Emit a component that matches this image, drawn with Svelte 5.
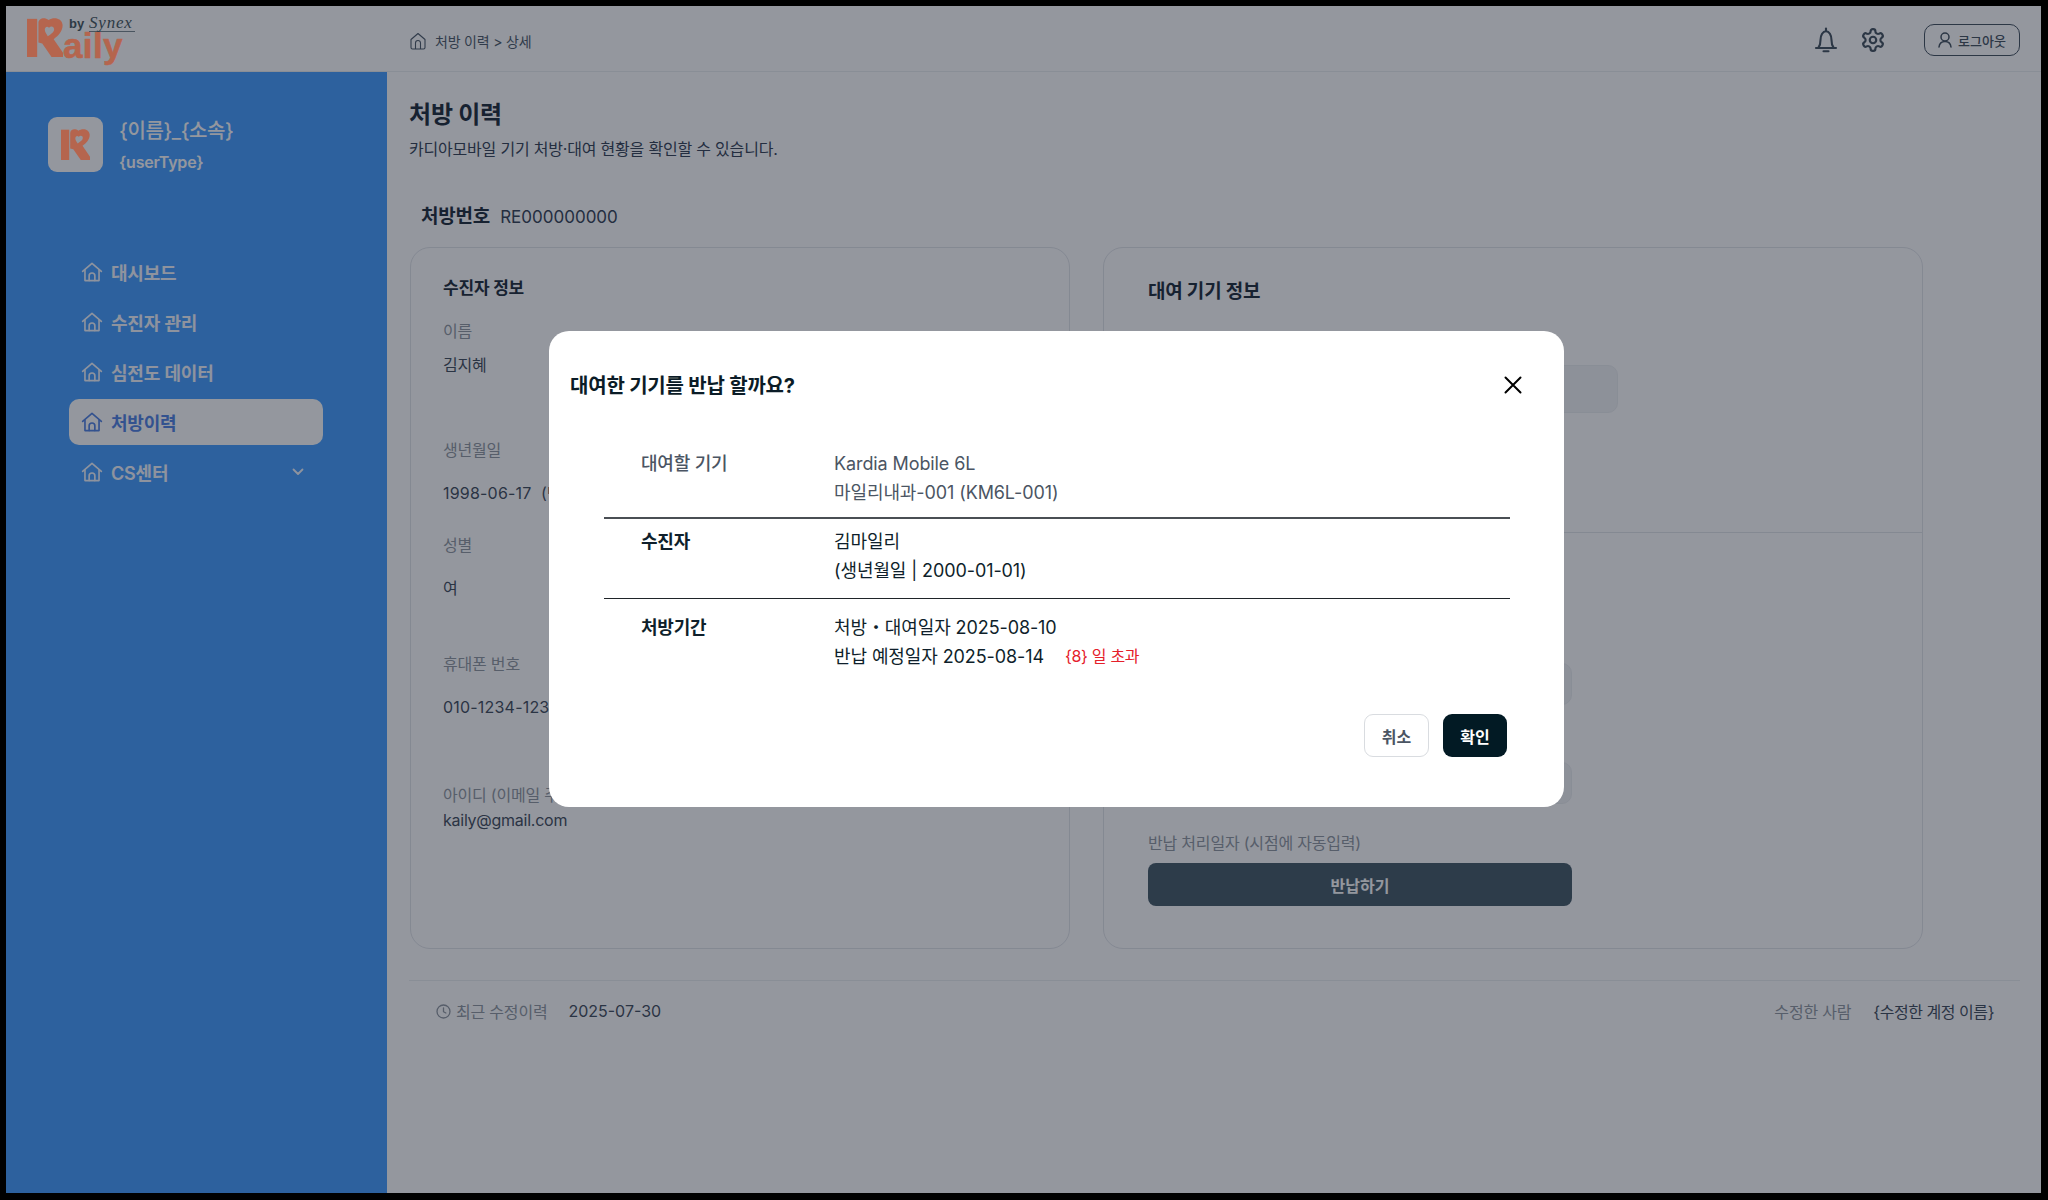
<script>
  const menu = [
    { label: "대시보드" },
    { label: "수진자 관리" },
    { label: "심전도 데이터" },
    { label: "처방이력", active: true },
    { label: "CS센터", more: true }
  ];
</script>

{#snippet home()}
  <svg class="home" width="22" height="22" viewBox="0 0 20 20" fill="none" stroke="currentColor" stroke-width="1.5" stroke-linejoin="round" stroke-linecap="round" aria-hidden="true">
    <path d="M1.500 9.500 10 2.200l8.500 7.300" />
    <path d="M3.600 8v9.800h12.800V8" />
    <path d="M7.400 17.800v-4.300a2.600 2.600 0 0 1 5.200 0v4.300" />
  </svg>
{/snippet}

{#snippet mark()}
  <svg viewBox="0 0 85 92" preserveAspectRatio="none" fill-rule="evenodd" aria-hidden="true">
    <path d="M0 2H24V92H0Z" />
    <path d="M27 58L27 12C27 1 41-3 51 5C62-3 82-1 84 16C85 30 74 42 63 50L85 82V92H58L36 60ZM52 23C47 18 42 22 42 28C42 34 47 39 49 43C57 38 64 33 64 27C64 20 57 18 52 23Z" />
  </svg>
{/snippet}

<div class="frame">
  <header class="topbar">
    <div class="logo">
      <div class="logo-mark">{@render mark()}</div>
      <span class="logo-word">aily</span>
      <span class="logo-by">by</span>
      <em class="logo-synex">Synex</em>
    </div>
    <nav class="crumb">
      <svg width="16" height="18" viewBox="0 0 16 18" fill="none" stroke="currentColor" stroke-width="1.100" stroke-linejoin="round">
        <path d="M1 7.500 8 1.500l7 6V15.500a1.500 1.500 0 0 1-1.500 1.500h-11A1.500 1.500 0 0 1 1 15.500z" />
        <path d="M5.500 17v-6a2.500 2.500 0 0 1 5 0v6" />
      </svg>
      <span>처방 이력 &gt; 상세</span>
    </nav>
    <div class="top-actions">
      <svg width="24" height="26" viewBox="0 0 24 26" fill="none" stroke="currentColor" stroke-width="2.100" stroke-linecap="round" stroke-linejoin="round">
        <path d="M12 1.500v2.500" />
        <path d="M4.500 20.500c1.600-2 2-4 2-7.500 0-5 2.400-8.800 5.500-8.800s5.500 3.800 5.500 8.800c0 3.500.4 5.500 2 7.500" />
        <path d="M2 21h20" />
        <path d="M9.500 24.300h5" />
      </svg>
      <svg width="26" height="26" viewBox="0 0 24 24" fill="none" stroke="currentColor" stroke-width="2" stroke-linecap="round" stroke-linejoin="round">
        <path d="M12.220 2h-.44a2 2 0 0 0-2 2v.18a2 2 0 0 1-1 1.730l-.43.25a2 2 0 0 1-2 0l-.15-.08a2 2 0 0 0-2.730.73l-.22.38a2 2 0 0 0 .73 2.730l.15.1a2 2 0 0 1 1 1.720v.51a2 2 0 0 1-1 1.740l-.15.09a2 2 0 0 0-.73 2.730l.22.38a2 2 0 0 0 2.730.73l.15-.08a2 2 0 0 1 2 0l.43.25a2 2 0 0 1 1 1.730V20a2 2 0 0 0 2 2h.44a2 2 0 0 0 2-2v-.18a2 2 0 0 1 1-1.730l.43-.25a2 2 0 0 1 2 0l.15.08a2 2 0 0 0 2.730-.73l.22-.39a2 2 0 0 0-.73-2.730l-.15-.08a2 2 0 0 1-1-1.740v-.5a2 2 0 0 1 1-1.740l.15-.09a2 2 0 0 0 .73-2.730l-.22-.38a2 2 0 0 0-2.730-.73l-.15.08a2 2 0 0 1-2 0l-.43-.25a2 2 0 0 1-1-1.730V4a2 2 0 0 0-2-2z" />
        <circle cx="12" cy="12" r="3" />
      </svg>
      <button class="logout" type="button">
        <svg width="14" height="16" viewBox="0 0 14 16" fill="none" stroke="currentColor" stroke-width="1.500" stroke-linecap="round">
          <circle cx="7" cy="5" r="4" />
          <path d="M1 15c.4-3.400 2.800-5.500 6-5.500s5.600 2.100 6 5.500" />
        </svg>
        로그아웃
      </button>
    </div>
  </header>

  <div class="body">
    <aside class="sidebar">
      <div class="profile">
        <div class="avatar"><div class="avatar-mark">{@render mark()}</div></div>
        <div class="who">
          <div class="who-name">&#123;이름&#125;_&#123;소속&#125;</div>
          <div class="who-type">&#123;userType&#125;</div>
        </div>
      </div>
      <ul class="menu">
        {#each menu as item}
          <li class:active={item.active}>
            {@render home()}
            <span>{item.label}</span>
            {#if item.more}
              <svg class="chev" width="12" height="8" viewBox="0 0 12 8" fill="none" stroke="currentColor" stroke-width="1.800" stroke-linecap="round" stroke-linejoin="round">
                <path d="M1.500 1.500 6 6l4.500-4.500" />
              </svg>
            {/if}
          </li>
        {/each}
      </ul>
    </aside>

    <main class="content">
      <h1>처방 이력</h1>
      <p class="sub">카디아모바일 기기 처방·대여 현황을 확인할 수 있습니다.</p>
      <div class="rx-no"><b>처방번호</b><span>RE000000000</span></div>

      <div class="cards">
        <section class="card patient">
          <h2>수진자 정보</h2>
          <div class="lab first">이름</div>
          <div class="val tight">김지혜</div>
          <div class="lab birth">생년월일</div>
          <div class="val num">1998-06-17 &nbsp;(만 27세)</div>
          <div class="lab">성별</div>
          <div class="val">여</div>
          <div class="lab phone">휴대폰 번호</div>
          <div class="val num">010-1234-1234</div>
          <div class="lab email">아이디 (이메일 주소)</div>
          <div class="val mail">kaily@gmail.com</div>
        </section>

        <section class="card device">
          <div class="device-top">
            <h2>대여 기기 정보</h2>
            <div class="box big"></div>
          </div>
          <div class="device-bottom">
            <div class="box one"></div>
            <div class="box two"></div>
            <div class="lab ret">반납 처리일자 (시점에 자동입력)</div>
            <button class="return" type="button">반납하기</button>
          </div>
        </section>
      </div>

      <footer class="foot">
        <div class="foot-side">
          <svg width="15" height="15" viewBox="0 0 15 15" fill="none" stroke="currentColor" stroke-width="1.300" stroke-linecap="round" stroke-linejoin="round">
            <circle cx="7.500" cy="7.500" r="6.500" />
            <path d="M7.500 3.800v3.900l2.400 1.300" />
          </svg>
          <span class="foot-lab">최근 수정이력</span>
          <span class="foot-val date">2025-07-30</span>
        </div>
        <div class="foot-side">
          <span class="foot-lab editor">수정한 사람</span>
          <span class="foot-val name">&#123;수정한 계정 이름&#125;</span>
        </div>
      </footer>
    </main>
  </div>

  <div class="overlay">
    <div class="modal">
      <div class="modal-head">
        <h3>대여한 기기를 반납 할까요?</h3>
        <button class="close" type="button" aria-label="닫기">
          <svg width="18" height="18" viewBox="0 0 18 18" fill="none" stroke="#000" stroke-width="2" stroke-linecap="round">
            <path d="M1.500 1.500l15 15M16.500 1.500l-15 15" />
          </svg>
        </button>
      </div>
      <div class="rows">
        <div class="row soft first-row">
          <div class="row-label">대여할 기기</div>
          <div class="row-val">Kardia Mobile 6L<br />마일리내과-001 (KM6L-001)</div>
        </div>
        <div class="row second-row">
          <div class="row-label">수진자</div>
          <div class="row-val">김마일리<br />(생년월일 | 2000-01-01)</div>
        </div>
        <div class="row third-row">
          <div class="row-label">처방기간</div>
          <div class="row-val">처방・대여일자 2025-08-10<br />반납 예정일자 2025-08-14<span class="over">&#123;8&#125; 일 초과</span></div>
        </div>
      </div>
      <div class="modal-btns">
        <button class="cancel" type="button">취소</button>
        <button class="ok" type="button">확인</button>
      </div>
    </div>
  </div>
</div>

<style>
  :global(body) {
    background: #000;
    font-family: Inter, "Noto Sans CJK KR", sans-serif;
    letter-spacing: -0.2px;
    color: #111827;
  }
  .frame {
    position: relative;
    width: 2035px;
    height: 1187px;
    margin: 6px 0 0 6px;
    background: #fff;
    overflow: hidden;
    display: flex;
    flex-direction: column;
  }

  .topbar {
    height: 66px;
    flex: none;
    display: flex;
    align-items: center;
    box-sizing: border-box;
    border-bottom: 1px solid #eceef1;
    color: #4b5968;
  }
  /* logo stays brighter than the dimmed page, so it sits over the overlay */
  .logo {
    width: 404px;
    height: 66px;
    flex: none;
  }
  .logo-mark,
  .logo-word,
  .logo-by,
  .logo-synex {
    position: absolute;
    z-index: 2;
  }
  .logo-mark {
    left: 21px;
    top: 12px;
    width: 36px;
    height: 39px;
    fill: #b5654e;
  }
  .logo-mark svg,
  .avatar-mark svg {
    display: block;
    width: 100%;
    height: 100%;
  }
  .logo-word {
    left: 57px;
    top: 27px;
    font: 700 35px/26px "Liberation Sans", sans-serif;
    letter-spacing: 0.4px;
    -webkit-text-stroke: 0.6px #b5654e;
    color: #b5654e;
  }
  .logo-by {
    left: 63px;
    top: 11px;
    font: 700 13px/14px "Liberation Sans", sans-serif;
    letter-spacing: 0;
    color: #2d3a45;
  }
  .logo-synex {
    left: 83px;
    top: 9px;
    width: 46px;
    box-sizing: border-box;
    font: italic 400 17px/16px "Liberation Serif", serif;
    letter-spacing: 0.8px;
    white-space: nowrap;
    color: #2d3a45;
    border-bottom: 1px solid #4a5560;
  }
  .crumb {
    display: flex;
    align-items: center;
    gap: 9px;
    font-size: 14px;
    margin-top: 4px;
  }
  .top-actions {
    margin-left: auto;
    display: flex;
    align-items: center;
    margin-right: 21px;
    margin-top: 3px;
    color: #42505e;
  }
  .top-actions > svg:first-child {
    margin-right: 22px;
  }
  .top-actions > svg:nth-child(2) {
    margin-right: 38px;
  }
  .logout {
    width: 96px;
    height: 32px;
    box-sizing: border-box;
    border: 1px solid #42505e;
    border-radius: 10px;
    background: none;
    color: #42505e;
    font: 500 13px Inter, "Noto Sans CJK KR", sans-serif;
    display: flex;
    align-items: center;
    justify-content: center;
    gap: 6px;
    padding: 0;
  }

  .body {
    flex: 1;
    display: flex;
    min-height: 0;
  }
  .sidebar {
    width: 381px;
    flex: none;
    background: #449dff;
    box-sizing: border-box;
    padding: 45px 0 0 42px;
  }
  .profile {
    display: flex;
    gap: 16px;
    align-items: flex-start;
  }
  .avatar {
    width: 55px;
    height: 55px;
    border-radius: 9px;
    background: #fff;
    box-sizing: border-box;
    padding: 12px 13px;
  }
  .avatar-mark {
    position: relative;
    z-index: 2;
    width: 29px;
    height: 31px;
    fill: #b5654e;
  }
  .who-name {
    font-size: 20px;
    font-weight: 500;
    line-height: 28px;
    letter-spacing: -0.4px;
    color: #fff;
  }
  .who-type {
    font-size: 16px;
    font-weight: 600;
    line-height: 22px;
    margin-top: 6px;
    color: #fff;
  }
  .menu {
    list-style: none;
    margin: 76px 0 0 21px;
    padding: 0;
    width: 254px;
    display: flex;
    flex-direction: column;
    gap: 4px;
  }
  .menu li {
    height: 46px;
    display: flex;
    align-items: center;
    box-sizing: border-box;
    padding-left: 12px;
    gap: 8px;
    font-size: 18px;
    font-weight: 600;
    color: #f4f8ff;
    border-radius: 10px;
  }
  .menu li.active {
    background: #fff;
    color: #4f81e4;
  }
  .chev {
    margin-left: auto;
    margin-right: 19px;
  }

  .content {
    flex: 1;
    min-width: 0;
    box-sizing: border-box;
    padding: 0 21px 0 22px;
    color: #3f4c5b;
  }
  h1 {
    margin: 26px 0 0;
    font-size: 24px;
    font-weight: 700;
    line-height: 34px;
    color: #1d2b3a;
  }
  .sub {
    margin: 5px 0 0;
    font-size: 16px;
    line-height: 24px;
    color: #334155;
  }
  .rx-no {
    margin: 42px 0 0 12px;
    display: flex;
    align-items: center;
    gap: 10px;
    font-size: 17px;
    line-height: 28px;
    letter-spacing: 0;
    color: #334155;
  }
  .rx-no b {
    font-size: 19px;
    letter-spacing: -0.2px;
    color: #1d2b3a;
    font-weight: 700;
  }
  .cards {
    display: flex;
    gap: 33px;
    margin: 16px 0 0 1px;
  }
  .card {
    height: 702px;
    box-sizing: border-box;
    border: 1px solid #e2e5ea;
    border-radius: 20px;
  }
  .card h2 {
    margin: 0;
    font-weight: 700;
    color: #1d2b3a;
  }
  .patient {
    width: 660px;
    padding: 26px 0 0 32px;
    overflow: hidden;
  }
  .patient h2 {
    font-size: 17px;
    line-height: 28px;
  }
  .lab {
    font-size: 16px;
    line-height: 24px;
    color: #9097a1;
    margin-top: 28px;
  }
  .lab.first {
    margin-top: 17px;
  }
  .lab.birth {
    margin-top: 61px;
  }
  .lab.phone {
    margin-top: 52px;
  }
  .lab.email {
    margin-top: 64px;
  }
  .val {
    font-size: 16px;
    line-height: 24px;
    color: #3f4c5b;
    margin-top: 19px;
  }
  .val.num {
    letter-spacing: 0.2px;
  }
  .val.tight {
    margin-top: 10px;
  }
  .val.mail {
    margin-top: 1px;
    letter-spacing: -0.25px;
  }
  .device {
    width: 820px;
    display: flex;
    flex-direction: column;
  }
  .device-top {
    height: 285px;
    flex: none;
    box-sizing: border-box;
    padding: 29px 0 0 44px;
    border-bottom: 1px solid #e2e5ea;
  }
  .device h2 {
    font-size: 19px;
    line-height: 30px;
  }
  .box {
    background: #f3f4f6;
    border: 1px solid #eceef1;
    border-radius: 10px;
    box-sizing: border-box;
  }
  .box.big {
    width: 470px;
    height: 48px;
    margin-top: 58px;
  }
  .device-bottom {
    box-sizing: border-box;
    padding: 130px 0 0 44px;
    width: 468px;
  }
  .box.one,
  .box.two {
    height: 42px;
  }
  .box.two {
    margin-top: 57px;
  }
  .lab.ret {
    margin-top: 27px;
  }
  .return {
    display: block;
    width: 100%;
    height: 43px;
    margin-top: 8px;
    border: none;
    border-radius: 8px;
    background: #445967;
    color: #fff;
    font: 600 16px Inter, "Noto Sans CJK KR", sans-serif;
  }

  .foot {
    margin-top: 31px;
    border-top: 1px solid #eceef1;
    height: 60px;
    display: flex;
    justify-content: space-between;
    align-items: center;
    padding: 0 26px 0 27px;
    font-size: 16px;
  }
  .foot-side {
    display: flex;
    align-items: center;
  }
  .foot-side svg {
    margin-right: 5px;
    color: #9097a1;
  }
  .foot-lab {
    color: #9097a1;
    margin-right: 21px;
  }
  .foot-lab.editor {
    margin-right: 22px;
  }
  .foot-val {
    color: #3f4c5b;
  }
  .foot-val.date {
    letter-spacing: 0;
  }
  .foot-val.name {
    letter-spacing: -0.45px;
  }

  .overlay {
    position: absolute;
    inset: 0;
    background: rgba(17, 24, 39, 0.45);
    box-sizing: border-box;
    padding: 325px 0 0 543px;
  }
  .modal {
    width: 1015px;
    height: 476px;
    box-sizing: border-box;
    background: #fff;
    border-radius: 20px;
    padding: 0 54px 0 21px;
    display: flex;
    flex-direction: column;
    color: #0f1f2b;
  }
  .modal-head {
    display: flex;
    align-items: center;
    justify-content: space-between;
    height: 106px;
    flex: none;
  }
  .modal-head h3 {
    margin: 0;
    font-size: 20px;
    font-weight: 700;
    color: #0b1c27;
  }
  .close {
    border: none;
    background: none;
    padding: 0;
    display: flex;
    margin: 2px -12px 0 0;
  }
  .rows {
    margin-left: 34px;
  }
  .row {
    display: flex;
    font-size: 18px;
    line-height: 28.5px;
    box-sizing: border-box;
    padding-left: 37px;
  }
  .first-row {
    height: 82px;
    border-bottom: 2px solid #4a4f54;
    padding-top: 13px;
  }
  .second-row {
    height: 80px;
    border-bottom: 1.5px solid #1f2429;
    padding-top: 9px;
  }
  .third-row {
    padding-top: 14.5px;
    line-height: 28px;
  }
  .row-label {
    width: 193px;
    flex: none;
    font-weight: 600;
  }
  .row-val {
    letter-spacing: -0.1px;
  }
  .soft .row-label,
  .soft .row-val {
    color: #4b5563;
  }
  .soft .row-label {
    font-weight: 500;
  }
  .over {
    margin-left: 21px;
    font-size: 16px;
    letter-spacing: -0.3px;
    vertical-align: 1px;
    color: #e5202a;
  }
  .modal-btns {
    margin-top: auto;
    margin-bottom: 50px;
    display: flex;
    justify-content: flex-end;
    gap: 14px;
    margin-right: 3px;
  }
  .modal-btns button {
    height: 43px;
    border-radius: 9px;
    font: 600 16px Inter, "Noto Sans CJK KR", sans-serif;
    box-sizing: border-box;
  }
  .cancel {
    width: 65px;
    background: #fff;
    border: 1px solid #d9dce0;
    color: #4b5563;
  }
  .ok {
    width: 64px;
    background: #021a24;
    border: none;
    color: #fff;
  }
</style>
